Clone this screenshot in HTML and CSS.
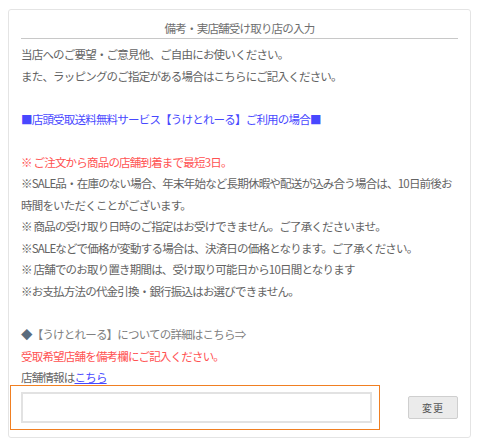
FILE: index.html
```html
<!DOCTYPE html>
<html>
<head>
  <meta charset="utf-8">
  <title>備考・実店舗受け取り店の入力</title>
  <link rel="stylesheet" href="styles.css">
</head>
<body>
  <div class="card">
    <div class="card-title">備考・実店舗受け取り店の入力</div>

    <div class="note">
      <p>当店へのご要望・ご意見他、ご自由にお使いください。</p>
      <p>また、ラッピングのご指定がある場合はこちらにご記入ください。</p>
      <p class="blank"></p>
      <p class="blue">■店頭受取送料無料サービス【うけとれーる】ご利用の場合■</p>
      <p class="blank"></p>
      <p class="red">※ ご注文から商品の店舗到着まで最短3日。</p>
      <p>※SALE品・在庫のない場合、年末年始など長期休暇や配送が込み合う場合は、10日前後お時間をいただくことがございます。</p>
      <p>※ 商品の受け取り日時のご指定はお受けできません。ご了承くださいませ。</p>
      <p>※SALEなどで価格が変動する場合は、決済日の価格となります。ご了承ください。</p>
      <p>※ 店舗でのお取り置き期間は、受け取り可能日から10日間となります</p>
      <p>※お支払方法の代金引換・銀行振込はお選びできません。</p>
      <p class="blank"></p>
      <p class="detail"><span class="diamond">◆</span>【うけとれーる】についての詳細はこちら⇒</p>
      <p class="red">受取希望店舗を備考欄にご記入ください。</p>
      <p>店舗情報は<a href="#">こちら</a></p>
    </div>

    <div class="entry">
      <div class="field">
        <input type="text" class="memo">
      </div>
      <button class="change">変更</button>
    </div>
  </div>
</body>
</html>
```

FILE: styles.css
```css
body { margin: 9px 8px 0 8px; background: #fff; font-family: "Noto Sans CJK JP", "Noto Sans", sans-serif; font-size: 11.5px; letter-spacing: -0.8px; color: #636363; }
.card { border: 1px solid #e4e4e4; border-radius: 3px; padding: 0 12px 7px 12px; }
.card-title { text-align: center; line-height: 20px; padding-top: 8px; border-bottom: 1px solid #c8c8c8; color: #6e6e6e; }
.note { margin-top: 5px; }
.note p { margin: 0; line-height: 21.55px; }
.note .blank { height: 21.55px; }
.blue { color: #4848ff; }
.red { color: #ff5252; }
.detail { color: #808080; }
.diamond { color: #5b6b7d; }
.note a { color: #4848ff; text-decoration: underline; }
.entry { display: flex; justify-content: space-between; align-items: center; margin-top: -4px; margin-left: -11px; }
.field { border: 1px solid #f07f22; padding: 6px 7px 6px 10px; }
.memo { display: block; width: 351px; height: 31px; box-sizing: border-box; margin: 0; border: 2px solid #e2e2e2; background: #fff; outline: none; }
.change { width: 50px; height: 23px; padding: 0; border: 1px solid #cfcfcf; border-radius: 2px; background: #ebebeb; color: #555; font-family: inherit; font-size: 10px; letter-spacing: 1px; }
```
